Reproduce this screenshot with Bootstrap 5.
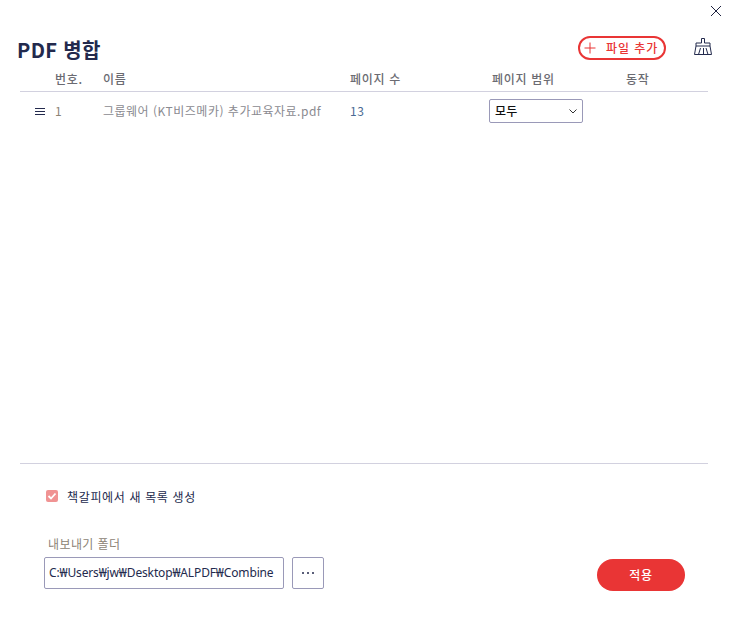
<!DOCTYPE html>
<html lang="ko">
<head>
<meta charset="utf-8">
<title>PDF 병합</title>
<link href="https://cdn.jsdelivr.net/npm/bootstrap@5.3.0/dist/css/bootstrap.min.css" rel="stylesheet">
<style>
html,body{height:621px;overflow:hidden;background:#fff}
body{font-family:"Noto Sans CJK KR","Noto Sans",sans-serif;font-size:12px;color:#232a4d}
.app-shell{height:621px;padding:0 22px 0 20px}
.close-row{height:29px;padding-top:5px;margin-right:-14px}
.icon-plain{background:none;border:0;padding:0;line-height:0;color:#232a4d}
.head-row{height:40px;margin-left:-3px;margin-right:-4px}
.app-title{font-size:20px;font-weight:700;line-height:1;margin:2px 0 0;color:#232a4d;letter-spacing:.35px}
.add-btn{height:24px;width:88px;border:2px solid #e93535;border-radius:12px;background:#fff;color:#e93535;font-size:12px;font-weight:500;padding:0 0 0 4px;gap:10px;letter-spacing:.95px;margin:-2px 28px 0 0;line-height:1}
.broom-btn{margin:-4px 0 0 0}
.grid-row{display:grid;grid-template-columns:35px 48px 247px 142px 134px 1fr}
.grid-head{height:23px;color:#6b6b72;font-size:12px;font-weight:500;line-height:20px;border-bottom:1px solid #d2d1df;letter-spacing:.7px}
.grid-body{height:38px;font-size:12px;color:#8a8a90;align-items:center;letter-spacing:.5px}
.num-cell{color:#8c8375}
.pages-cell{color:#4a6a94}
.drag-bars{margin-left:15px;width:10px;height:7px;border-top:1px solid #232a4d;border-bottom:1px solid #232a4d;position:relative}
.drag-bars::after{content:"";display:block;height:1px;background:#232a4d;margin-top:2px}
.range-select{width:94px;height:24px;border:1px solid #9a99b8;border-radius:2px;padding:0 5px;color:#111;font-size:12px;font-weight:500;margin-left:-3px;letter-spacing:.3px}
.spacer-area{flex:1 1 auto}
.bottom-area{border-top:1px solid #d2d1df;height:158px}
.check-row{padding:26px 0 0 26px;gap:9px;font-size:12px;color:#232a4d;line-height:13px;height:72px;letter-spacing:.65px}
.check-box{width:12px;height:12px;background:#f09393;border-radius:2px;line-height:0;flex:none}
.folder-label{color:#8c8375;font-size:12px;line-height:16px;margin-left:28px;height:21px;letter-spacing:.4px}
.path-input{width:240px;height:32px;margin-left:24px;border:1px solid #9a99b8;border-radius:2px;font-size:12px;font-family:"Noto Sans","Noto Sans CJK KR",sans-serif;color:#232a4d;padding:0 4px;line-height:30px;white-space:nowrap;overflow:hidden;letter-spacing:-.14px}
.dots-btn{width:32px;height:32px;margin-left:8px;border:1px solid #9a99b8;border-radius:2px;background:#fff;gap:3px;padding:0}
.dots-btn i{display:block;width:2px;height:2px;border-radius:50%;background:#232a4d}
.apply-btn{width:88px;height:32px;margin-left:auto;margin-right:23px;margin-top:2px;border:0;border-radius:16px;background:#e93535;color:#fff;font-size:12px;font-weight:500;padding:0;letter-spacing:.8px}
</style>
</head>
<body>
<div class="app-shell d-flex flex-column">
  <div class="close-row d-flex justify-content-end align-items-start">
    <button class="icon-plain" aria-label="닫기"><svg width="12" height="12" viewBox="0 0 12 12" fill="none" stroke="#1f2340" stroke-width="1"><path d="M1 1l10 10M11 1L1 11"/></svg></button>
  </div>
  <div class="head-row d-flex align-items-center">
    <h1 class="app-title">PDF 병합</h1>
    <button class="add-btn d-flex align-items-center ms-auto">
      <svg width="12" height="12" viewBox="0 0 12 12" stroke="#e93535" stroke-width="1"><path d="M6 .5v11M.5 6h11"/></svg>
      <span>파일 추가</span>
    </button>
    <button class="icon-plain broom-btn" aria-label="지우기"><svg width="18" height="18" viewBox="0 0 18 18" fill="none" stroke="#232a4d" stroke-width="1"><path d="M7.500 .500h3v4.500h5.500v3H2V5h5.500zM2 8L.5 16.500h17L16 8M6.500 10l-2 6.500M9.500 10v6.500M12 10l2 6.500"/></svg></button>
  </div>
  <div class="grid-row grid-head">
    <span></span><span>번호.</span><span>이름</span><span>페이지 수</span><span>페이지 범위</span><span>동작</span>
  </div>
  <div class="grid-row grid-body">
    <span class="drag-bars"></span>
    <span class="num-cell">1</span>
    <span>그룹웨어 (KT비즈메카) 추가교육자료.pdf</span>
    <span class="pages-cell">13</span>
    <span class="range-select d-flex align-items-center justify-content-between">모두<svg width="8" height="5" viewBox="0 0 8 5" fill="none" stroke="#333" stroke-width="1"><path d="M.5.500L4 4 7.500.500"/></svg></span>
    <span></span>
  </div>
  <div class="spacer-area"></div>
  <div class="bottom-area">
    <div class="check-row d-flex align-items-start">
      <span class="check-box d-inline-block"><svg width="12" height="12" viewBox="0 0 12 12" fill="none" stroke="#fff" stroke-width="1.800"><path d="M2.500 6l2.500 2.500 4.500-5"/></svg></span>
      <span>책갈피에서 새 목록 생성</span>
    </div>
    <div class="folder-label">내보내기 폴더</div>
    <div class="d-flex align-items-start">
      <div class="path-input">C:₩Users₩jw₩Desktop₩ALPDF₩Combine</div>
      <button class="dots-btn d-flex align-items-center justify-content-center" aria-label="찾아보기"><i></i><i></i><i></i></button>
      <button class="apply-btn">적용</button>
    </div>
  </div>
</div>
</body>
</html>
